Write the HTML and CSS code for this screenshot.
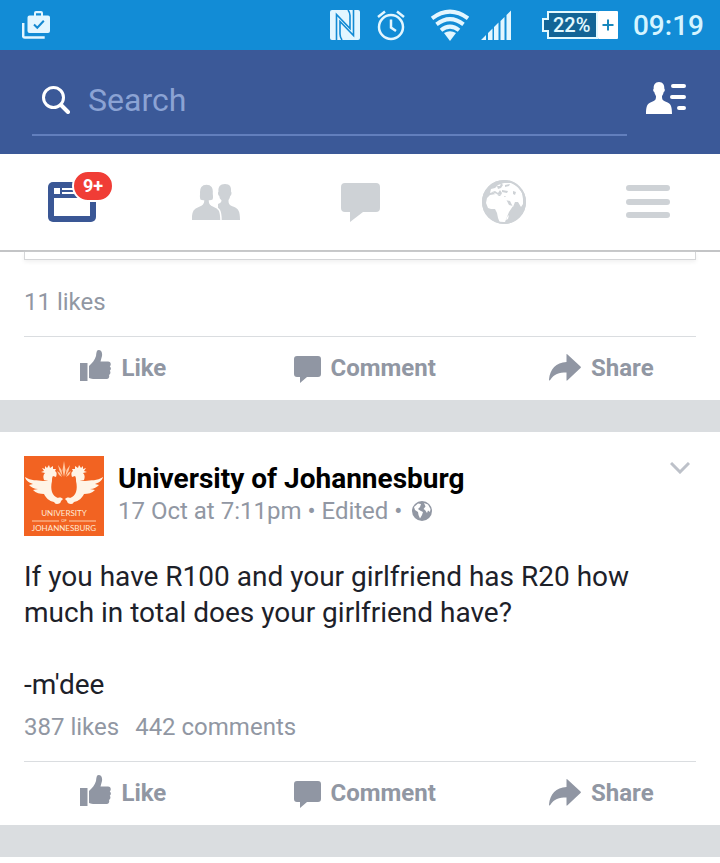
FILE: index.html
```
<!DOCTYPE html>
<html lang="en">
<head>
  <meta charset="UTF-8" />
  <meta name="viewport" content="width=device-width, initial-scale=1" />
  <title>News Feed</title>
  <link rel="stylesheet" href="styles.css">
</head>
<body>
  <!-- shared icons -->
  <svg class="sprite" aria-hidden="true">
    <symbol id="icon-like" viewBox="0 0 31 31">
      <path d="M0 13h7.500v18H0z" />
      <path d="M9 16c3-3 6-6 7-10 .5-3 .5-6 2.500-6 3 0 4 3 3.500 6l-1.500 5.500H28c3 0 3.500 3.500 1.800 4.700 1.700 1.500 1.200 3.800 0 4.600 1.200 1.500.5 3.500-.8 4.200.8 2-.4 4-2.200 4H13c-2 0-3-1-4-1z" />
    </symbol>
    <symbol id="icon-comment" viewBox="0 0 27 27">
      <path d="M3 0h21q3 0 3 3v15q0 3-3 3H13l-7 6v-6H3q-3 0-3-3V3q0-3 3-3z" />
    </symbol>
    <symbol id="icon-share" viewBox="0 0 32 27">
      <path d="M17.500.5Q17.500-.5 18.500.4L31.500 12.500q.8.800 0 1.600L18.500 26.300q-1 .8-1-.3v-7.500C10 18.500 5 20 1.200 26 .6 27 0 26.500 0 25.500 1 15 7 8.500 17.500 8z" />
    </symbol>
  </svg>

  <div class="status-bar">
    <svg class="status-app" viewBox="0 0 28 28" width="28" height="28" fill="#e3f6ff">
      <path fill-rule="evenodd" d="M7.500 4.500H12V2q0-2 2-2h5q2 0 2 2v2.500h5q2 0 2 2V20q0 2-2 2H7.500q-2 0-2-2V6.500q0-2 2-2zM14 4.500h5V2.300h-5z" />
      <path d="M12 13.500l3.300 3.300 6.500-7" fill="none" stroke="#1488d0" stroke-width="2" />
      <path d="M1.200 12v13q0 1.500 1.500 1.500h20" fill="none" stroke="#e3f6ff" stroke-width="2.500" />
    </svg>
    <svg viewBox="0 0 34 32" width="34" height="32" fill="#e3f6ff">
      <path d="M4 1h26q2 0 2 2v26q0 2-2 2H4q-2 0-2-2V3q0-2 2-2z" />
      <path d="M8.500 31V5.500l13.500 14V6.500q0-3-2-5.500M25.500 1v25.500l-13.500-14V25q0 3 2 6" fill="none" stroke="#128ad4" stroke-width="1.600" />
    </svg>
    <svg viewBox="0 0 34 32" width="34" height="32" fill="none" stroke="#e3f6ff" stroke-width="2.500">
      <circle cx="17" cy="18" r="12" />
      <path d="M17 10.500v8l5 3.500M4 8l7-5.500M30 8l-7-5.500" />
    </svg>
    <svg viewBox="0 0 49 32" width="49" height="32" fill="none" stroke="#e3f6ff" stroke-width="4">
      <path d="M12 9.300Q30 -4 48 9.300" />
      <path d="M16.500 15.300Q30 5 43.500 15.300" />
      <path d="M21 21.200Q30 14 39 21.200" />
      <path d="M24 24Q30 20.500 36 24L30 32z" fill="#e3f6ff" stroke="none" />
    </svg>
    <svg viewBox="0 0 49 32" width="49" height="32" fill="#e3f6ff">
      <path d="M0 31l5-5v5zM7 24l4.500-4.500V31H7zM13 18l4.500-4.500V31H13zM19.500 12l4-4v23h-4zM25.500 6L30 1.500V31h-4.500z" />
    </svg>
    <svg viewBox="0 0 76 28" width="76" height="28">
      <path d="M6 1h49v26H6v-7H1V8h5z" fill="#126596" stroke="#e3faff" stroke-width="2" />
      <rect x="56" y="0" width="20" height="28" rx="1" fill="#fff" />
      <path d="M66 8.500v11M60.500 14h11" stroke="#1888bd" stroke-width="2" />
      <text class="battery-text" x="11" y="21">22%</text>
    </svg>
    <span class="clock">09:19</span>
  </div>

  <header class="search-bar">
    <form class="search-form">
      <label for="search">
        <svg viewBox="0 0 28 28" width="28" height="28" fill="none" stroke="#fff" aria-label="Search">
          <circle cx="11.500" cy="11.500" r="10" stroke-width="3" />
          <path d="M19 19l7 7" stroke-width="4" stroke-linecap="round" />
        </svg>
      </label>
      <input type="text" id="search" name="search" placeholder="Search" />
    </form>
    <button type="button" class="contacts" aria-label="Contacts">
      <svg viewBox="0 0 40 32" width="40" height="32" fill="#fff">
        <path d="M13 0c4 0 5.500 3 5.300 6.500 1 1 .5 3-.6 3.600-.3 2-1.200 3-1.700 4.200 0 4 1 4.200 4.500 5.700 4.500 1.800 5.500 4.500 5.500 12H0c0-7.500 1-10.200 5.500-12C9 18.500 10 18.300 10 14.300 9.500 13 8.600 12 8.300 10.100c-1.100-.6-1.600-2.600-.6-3.600C7.500 3 9 0 13 0z" />
        <path d="M27 4h11M26 15h12M33 26h5" stroke="#fff" stroke-width="4" stroke-linecap="round" />
      </svg>
    </button>
  </header>

  <nav class="tabs">
    <a href="#feed" class="tab" aria-label="News Feed">
      <span class="feed-icon">
        <svg viewBox="0 0 48 40" width="48" height="40">
          <rect width="48" height="40" rx="5" fill="#3a5795" />
          <path d="M6 16h36v18H6zM6 6h6v6H6zM14 6h28v2H14zM14 10h28v2H14z" fill="#fff" />
        </svg>
        <span class="badge">9+</span>
      </span>
    </a>
    <a href="#friends" class="tab" aria-label="Friends">
      <svg viewBox="0 0 48 36" width="48" height="36" fill="#ced2d6">
        <path d="M33 0c5 0 6.500 3 6 7.500 1 1 .5 4-.8 4.500-.3 2-1.200 3-1.700 4.200 0 4 1 4.800 4.500 6.300 5.500 2 7 4.500 7 13.500H26V20c2.500-1 3.500-2 3.500-3.800C28 15 27.500 14 27.300 12c-1.300-.5-1.800-3.500-.8-4.500C26 3 28 0 33 0z" />
        <path d="M14.500 0C20 0 22 4 21.500 9c0 3 1 5-.5 7-1 1-2.500 1-3.500 1 0 3 1 4 4 5 5.500 2 7.500 4 7.500 15H-1C-1 26 1.500 24 7 22c3-1 4.500-2 4.500-5-1 0-2.500 0-3.500-1-1.500-2-.7-4-.7-7C7 4 9 0 14.500 0z" stroke="#fff" stroke-width="1.500" />
      </svg>
    </a>
    <a href="#messages" class="tab" aria-label="Messages">
      <svg viewBox="0 0 39 39" width="39" height="39" fill="#ced2d6">
        <path d="M4 0h31q4 0 4 4v21q0 4-4 4H22L9 39V29H4q-4 0-4-4V4q0-4 4-4z" />
      </svg>
    </a>
    <a href="#notifications" class="tab" aria-label="Notifications">
      <svg viewBox="0 0 44 44" width="44" height="44">
        <circle cx="22" cy="22" r="22" fill="#ced2d6" />
        <g fill="#fff">
          <!-- Africa -->
          <path d="M5 18l3-3 6-1 3 2 5 0 2 3 3 6 4 1-4 6-2 5-2 5-3 1h-2l-2-5-1-5-2-4-4 0-3-1-2-5z" />
          <!-- Europe and Asia -->
          <path d="M8 13l1-4 4-1 3-3 6-2 8 0 6 4 4 6 1 6 0 5-2 3-3-5-3 0-2 5-3-6-5-1-1-2 2-2-5 0-2-2-3 1-3-3-3 1z" />
          <path d="M25 37l2-2-1 4-2 1z" />
        </g>
        <g fill="#ced2d6">
          <path d="M10 12l3-1 3 2 2-3 2 3-1 2-4-1zM15 6l3 0 1-3 2 2-2 3-3 1zM20 10l6 1-1 2-5-1zM23 5l5-1-1 2-4 1zM31 11l3 1-1 3-2-1z" />
        </g>
        <circle cx="22" cy="22" r="21" fill="none" stroke="#ced2d6" stroke-width="2" />
      </svg>
    </a>
    <a href="#menu" class="tab" aria-label="Menu">
      <svg viewBox="0 0 44 36" width="44" height="36" stroke="#ced2d6" stroke-width="6" stroke-linecap="round">
        <path d="M3 4h38M3 18h38M3 31h38" />
      </svg>
    </a>
  </nav>

  <main>
    <article class="post">
      <div class="attachment"></div>
      <p class="counts first-counts"><span>11 likes</span></p>
      <div class="actions">
        <button type="button"><svg class="like"><use href="#icon-like" /></svg>Like</button>
        <button type="button"><svg class="comment"><use href="#icon-comment" /></svg>Comment</button>
        <button type="button"><svg class="share"><use href="#icon-share" /></svg>Share</button>
      </div>
    </article>

    <article class="post">
      <div class="post-header">
        <svg class="avatar" viewBox="0 0 80 80" role="img" aria-label="University of Johannesburg">
          <rect width="80" height="80" fill="#f26322" />
          <g fill="#fff4e6">
            <g id="bird">
              <!-- wing and body -->
              <path d="M1 21c6 4 12 3 18 4 3 0 5-1 8-2l1 2c-1 4-1 8 0 11 1 3 3 5 6 6 2-1 4 0 5 1l-2 2c0 2-2 3-4 3-2 0-2-1-3-2-5-1-8-4-10-8-4 0-8-1-11-4l5-1c-4 0-7-2-9-4l4-1c-3-1-7-3-8-7z" />
              <!-- head and crest -->
              <path d="M20 24c-1-3-1-5 1-7l-4-1 3-1-2-3 3 1 0-3 2 2 2-3 1 3 3-2 0 3 3 0-1 2c2 1 2 3 1 6l-3-1c-1 1-1 3-1 5z" />
            </g>
            <use href="#bird" transform="translate(80 0) scale(-1 1)" />
          </g>
          <path d="M40 5l1.500 9-1.500 7-1.500-7zM34 9l3.500 5 1 6-3-5zM46 9l-3.500 5-1 6 3-5zM33 15l3 2 2 4-3-2zM47 15l-3 2-2 4 3-2z" fill="#ffc9a3" />
          <path d="M8 65h27M45 65h27" stroke="#ffd0ac" stroke-width="1" />
          <g class="avatar-text" text-anchor="middle">
            <text x="40" y="60">UNIVERSITY</text>
            <text class="avatar-of" x="40" y="66">OF</text>
            <text x="40" y="75">JOHANNESBURG</text>
          </g>
        </svg>
        <div class="post-info">
          <h2><a href="#page">University of Johannesburg</a></h2>
          <p class="meta">
            17 Oct at 7:11pm • Edited •
            <svg viewBox="0 0 20 20" width="20" height="20" aria-label="Public">
              <circle cx="10" cy="10" r="10" fill="#9197a3" />
              <path d="M2 6l4-3.500 3 .5-1 3-2 2 2 1.500 3 1.500-1 3-2 3.500-1.500-3.500-.5-3-3-2zM12 2l4 1.500 2.500 4.500-.5 3-2-1.500-1 2.500-2-3-1.500-1 2-2.500z" fill="#fff" />
            </svg>
          </p>
        </div>
        <button type="button" class="more" aria-label="More options">
          <svg viewBox="0 0 20 12" width="20" height="12" fill="none" stroke="#bdc1c9" stroke-width="3">
            <path d="M1 1l9 9 9-9" />
          </svg>
        </button>
      </div>
      <p class="post-text">If you have R100 and your girlfriend has R20 how much in total does your girlfriend have?<br><br>-m'dee</p>
      <p class="counts"><span>387 likes</span><span>442 comments</span></p>
      <div class="actions">
        <button type="button"><svg class="like"><use href="#icon-like" /></svg>Like</button>
        <button type="button"><svg class="comment"><use href="#icon-comment" /></svg>Comment</button>
        <button type="button"><svg class="share"><use href="#icon-share" /></svg>Share</button>
      </div>
    </article>
  </main>
</body>
</html>
```

FILE: styles.css
```
* {
  box-sizing: border-box;
}

body {
  margin: 0;
  background-color: #fff;
  font-family: Roboto, sans-serif;
  color: #1d2129;
}

h2,
p {
  margin: 0;
}

svg {
  display: block;
  flex: none;
}

button {
  padding: 0;
  border: none;
  background: none;
  font-family: inherit;
  cursor: pointer;
}

.sprite {
  position: absolute;
  width: 0;
  height: 0;
}

/* status bar */
.status-bar {
  display: flex;
  align-items: center;
  gap: 12px;
  height: 50px;
  padding: 0 16px 0 22px;
  background-color: #128cd6;
}

.status-app {
  margin-right: auto;
}

.battery-text {
  fill: #e3faff;
  font-size: 20px;
  font-weight: 500;
}

.clock {
  padding: 2px 0 0 3px;
  color: #d5f4ff;
  font-size: 28px;
  font-weight: 500;
  line-height: 48px;
}

/* search */
.search-bar {
  display: flex;
  align-items: center;
  gap: 19px;
  height: 104px;
  padding: 0 34px 0 32px;
  background-color: #3b5998;
}

.search-form {
  display: flex;
  flex: 1;
  align-items: center;
  gap: 18px;
  height: 68px;
  padding: 0 0 2px 10px;
  border-bottom: 2px solid #627fbd;
}

.search-form input {
  flex: 1;
  min-width: 0;
  padding: 0;
  border: none;
  outline: none;
  background: none;
  color: #fff;
  font-family: inherit;
  font-size: 32px;
}

.search-form input::placeholder {
  color: #8ba3d4;
}

.contacts {
  margin-bottom: 8px;
}

/* tabs */
.tabs {
  display: grid;
  grid-template-columns: repeat(5, 1fr);
  height: 98px;
  border-bottom: 2px solid #c3c4c6;
}

.tab {
  display: flex;
  align-items: center;
  justify-content: center;
  text-decoration: none;
}

.feed-icon {
  position: relative;
}

.badge {
  position: absolute;
  top: -12px;
  left: 24px;
  padding: 0 9px;
  border: 2px solid #fff;
  border-radius: 16px;
  background-color: #f03d36;
  color: #fff;
  font-size: 18px;
  font-weight: bold;
  line-height: 28px;
}

/* posts */
.post {
  padding: 0 24px;
  border-bottom: 32px solid #dadde0;
}

.attachment {
  height: 8px;
  border: 1px solid #d5d6d8;
  border-top: none;
  box-shadow: 0 2px 4px #f0f0f0;
}

.counts {
  display: flex;
  gap: 16px;
  padding: 6px 0 16px;
  color: #9197a3;
  font-size: 24px;
  line-height: 36px;
}

.counts.first-counts {
  padding-top: 24px;
}

.actions {
  display: grid;
  grid-template-columns: 21fr 30fr 20fr;
  border-top: 1px solid #dadde0;
}

.actions button {
  display: flex;
  align-items: center;
  justify-content: center;
  gap: 10px;
  height: 63px;
  padding-bottom: 2px;
  color: #9197a3;
  font-size: 24px;
  font-weight: bold;
}

.actions svg {
  fill: #9096a3;
}

.like {
  width: 31px;
  height: 31px;
  margin-bottom: 4px;
}

.comment {
  width: 27px;
  height: 27px;
  margin-top: 4px;
}

.share {
  width: 32px;
  height: 27px;
}

.post-header {
  display: flex;
  align-items: flex-start;
  gap: 14px;
  padding: 24px 6px 0 0;
}

.avatar {
  width: 80px;
  height: 80px;
}

.avatar-text {
  fill: #ffe9d6;
  font-family: Lato, sans-serif;
  font-size: 8px;
}

.avatar-of {
  font-size: 4px;
}

.post-info {
  flex: 1;
  padding-top: 6px;
}

.post-info h2 {
  font-size: 28px;
  line-height: 34px;
}

.post-info a {
  color: #000;
  text-decoration: none;
}

.meta {
  display: flex;
  align-items: center;
  gap: 10px;
  color: #9197a3;
  font-size: 24px;
  line-height: 30px;
}

.more {
  margin-top: 6px;
}

.post-text {
  padding-top: 23px;
  font-size: 28px;
  line-height: 36px;
}
```
